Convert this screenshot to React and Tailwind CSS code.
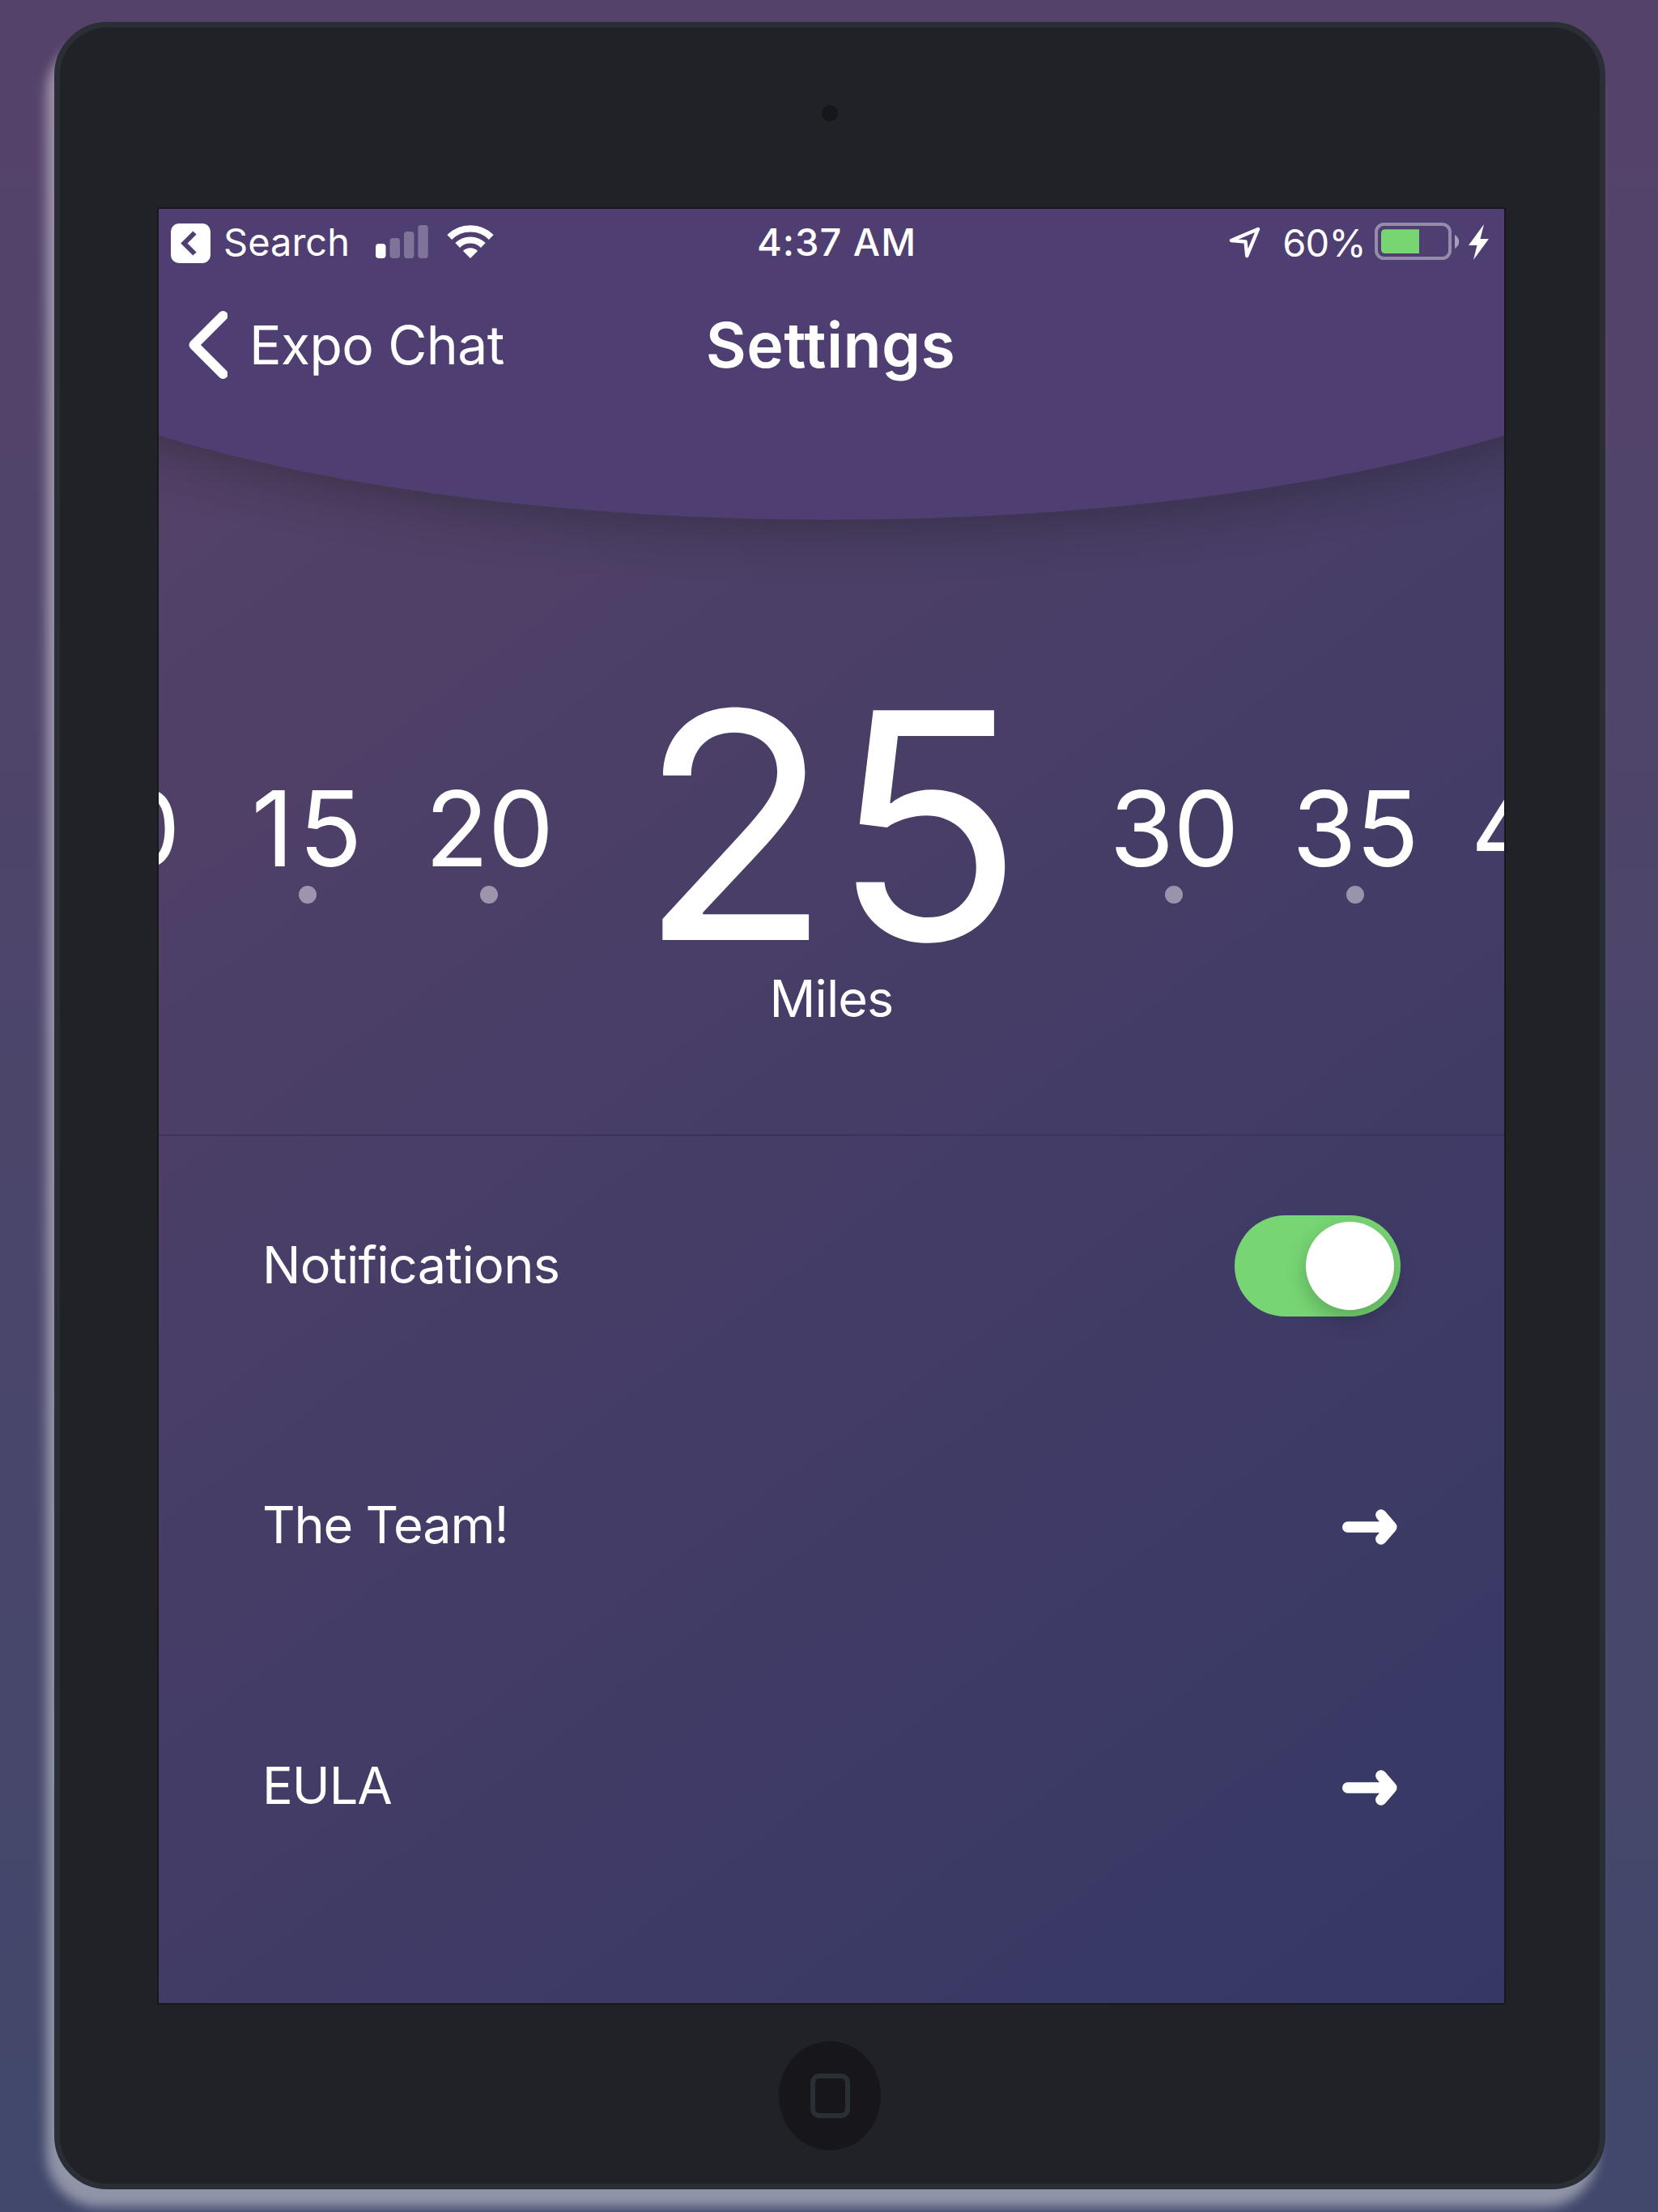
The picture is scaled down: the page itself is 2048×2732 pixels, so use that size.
const ITEMS_LEFT = ["10", "15", "20"];
const ITEMS_RIGHT = ["30", "35", "40"];

function Mile({ value }) {
  const tracking = value === "15" ? "pl-[4px] tracking-[6px]" : "tracking-[-1px]";
  return (
    <div className="flex w-[224px] shrink-0 flex-col items-center">
      <div className={"text-[129px] leading-[130px] " + tracking}>{value}</div>
      <div className="mt-[6px] size-[22px] rounded-full bg-white/45" />
    </div>
  );
}

function StatusBar() {
  return (
    <div className="grid h-[84px] grid-cols-3 items-start pt-[17px] text-[47px] leading-[48px]">
      <div className="flex items-center pl-[15px]">
        <svg className="size-[49px]" viewBox="0 0 49 49">
          <rect width="49" height="49" rx="10" fill="#fff" />
          <path d="M29.5 11.5L16.5 24.5L29.5 37.5" fill="none" stroke="#4f3e72" strokeWidth="6" />
        </svg>
        <span className="ml-[16px] pb-[2px]">Search</span>
        <svg className="mb-[3px] ml-[32px] h-[42px] w-[66px]" viewBox="0 0 66 42">
          <rect x="0" y="23" width="12.5" height="18" rx="4" fill="#fff" />
          <rect x="17.5" y="16" width="12.5" height="25" rx="4" fill="#fff" opacity=".28" />
          <rect x="35" y="8" width="12.5" height="33" rx="4" fill="#fff" opacity=".28" />
          <rect x="52.3" y="0" width="12.5" height="41" rx="4" fill="#fff" opacity=".28" />
        </svg>
        <svg className="mb-[3px] ml-[22px] h-[42px] w-[58px]" viewBox="0 0 58 42">
          <g fill="none" stroke="#fff" strokeWidth="8.2">
            <path d="M3.2 15A36.6 36.6 0 0 1 54.8 15" />
            <path d="M13.2 25A22.4 22.4 0 0 1 44.8 25" />
          </g>
          <path d="M29 41L20 32A12.8 12.8 0 0 1 38 32Z" fill="#fff" />
        </svg>
      </div>
      <div className="pl-[13px] text-center font-medium tracking-[1px]">4:37 AM</div>
      <div className="flex items-center justify-end pr-[19px]">
        <svg className="mb-[2px] h-[42px] w-[40px]" viewBox="0 0 40 42">
          <path d="M36 5L3 19L20.500 20.500L22.300 38Z" fill="none" stroke="#fff" strokeWidth="4.4" strokeLinejoin="round" />
        </svg>
        <span className="ml-[26px] tracking-[-0.7px]">60%</span>
        <svg className="mb-[3px] ml-[11px] h-[46px] w-[106px]" viewBox="0 0 106 46">
          <rect x="2" y="2" width="91" height="42" rx="9.500" fill="none" stroke="#fff" strokeWidth="4" opacity=".4" />
          <path d="M13 8.300H55V38H13Q8 38 8 33V13.300Q8 8.300 13 8.300Z" fill="#78d672" />
          <path d="M99 15C106 19 106 28 99 32Z" fill="#fff" opacity=".5" />
        </svg>
        <svg className="mb-[2px] ml-[10px] h-[44px] w-[25px]" viewBox="0 0 25 44">
          <path d="M19 0L0 26H10.500L6 44L25 18H14.500Z" fill="#fff" />
        </svg>
      </div>
    </div>
  );
}

function Header() {
  return (
    <div className="relative h-[384px] shrink-0">
      <div className="absolute inset-0 h-[560px] overflow-hidden">
        <div className="absolute -top-[326px] left-1/2 h-[710px] w-[2350px] -translate-x-1/2 rounded-[50%] bg-[#4f3e72] shadow-[0_12px_60px_rgba(32,32,32,0.42)]" />
      </div>
      <div className="relative">
        <StatusBar />
        <div className="grid h-[168px] grid-cols-3 items-center">
          <div className="flex items-center pl-[36px]">
            <svg className="h-[84px] w-[49px]" viewBox="0 0 49 84">
              <path d="M43.500 6L7.500 42L43.500 78" fill="none" stroke="#fff" strokeWidth="12" strokeLinecap="round" strokeLinejoin="round" />
            </svg>
            <span className="ml-[27px] whitespace-nowrap text-[66px] leading-[70px] tracking-[-0.6px]">Expo Chat</span>
          </div>
          <h1 className="pr-[2px] text-center text-[77px] font-semibold leading-[80px] tracking-[0.4px]">Settings</h1>
        </div>
      </div>
    </div>
  );
}

function Arrow() {
  return (
    <svg className="mt-[2px] h-[44px] w-[68px]" viewBox="0 0 68 44">
      <path d="M6.700 22H55M47.800 7L60.800 22L47.800 37" fill="#fff" stroke="#fff" strokeWidth="13.400" strokeLinecap="round" strokeLinejoin="round" />
    </svg>
  );
}

function Row({ label, children, className }) {
  return (
    <div className={"flex items-center justify-between pl-[128px] text-[63px] leading-[70px] " + className}>
      <span className="pb-[4px]">{label}</span>
      {children}
    </div>
  );
}

export default function App() {
  return (
    <div className="h-[2732px] w-[2048px] overflow-hidden bg-gradient-to-b from-[#55426a] to-[#41486b] pl-[67px] pt-[27px] font-['Inter',sans-serif] text-white">
      <div className="flex h-[2677px] w-[1916px] flex-col items-center rounded-[66px] border-[7px] border-[#2a2f35] bg-[#212227] shadow-[-10px_22px_14px_rgba(255,255,255,0.42)]">
        <div className="mt-[96px] size-[20px] shrink-0 rounded-full bg-[#17171b]" />
        <div className="mt-[106px] flex h-[2220px] w-[1666px] shrink-0 translate-x-[2px] flex-col border-2 border-[#18181b]">
          <div className="flex flex-1 flex-col overflow-hidden bg-[linear-gradient(143.13deg,#564268_0%,#353865_100%)]">
            <Header />
            <div className="flex h-[759px] shrink-0 items-start justify-center">
              <div className="mt-[316px] flex w-[622px] shrink-0 justify-end">
                {ITEMS_LEFT.map((v) => (
                  <Mile key={v} value={v} />
                ))}
              </div>
              <div className="flex w-[622px] shrink-0 flex-col items-center pt-[202px]">
                <div className="text-[390px] leading-[350px] tracking-[0.5px]">25</div>
                <div className="mt-[4px] text-[63px] leading-[70px] tracking-[-0.9px]">Miles</div>
              </div>
              <div className="mt-[316px] flex w-[622px] shrink-0">
                {ITEMS_RIGHT.map((v) => (
                  <Mile key={v} value={v} />
                ))}
              </div>
            </div>
            <div className="border-t-2 border-black/15">
              <Row label="Notifications" className="h-[321px] pr-[128px] tracking-[-0.65px]">
                <div className="flex h-[125px] w-[205px] items-center justify-end rounded-full bg-[#77d673] pr-[8px]">
                  <div className="size-[109px] rounded-full bg-white shadow-[0_10px_26px_rgba(0,0,0,0.22)]" />
                </div>
              </Row>
              <Row label="The Team!" className="h-[321px] pr-[132px] tracking-[-1.2px]">
                <Arrow />
              </Row>
              <Row label="EULA" className="h-[323px] pr-[132px] tracking-[-1px]">
                <Arrow />
              </Row>
            </div>
          </div>
        </div>
        <div className="mt-[45px] flex h-[135px] w-[126px] shrink-0 items-center justify-center rounded-[50%] bg-[#17171b]">
          <div className="h-[55px] w-[49px] rounded-[11px] border-[6px] border-[#2a2f35]" />
        </div>
      </div>
    </div>
  );
}
